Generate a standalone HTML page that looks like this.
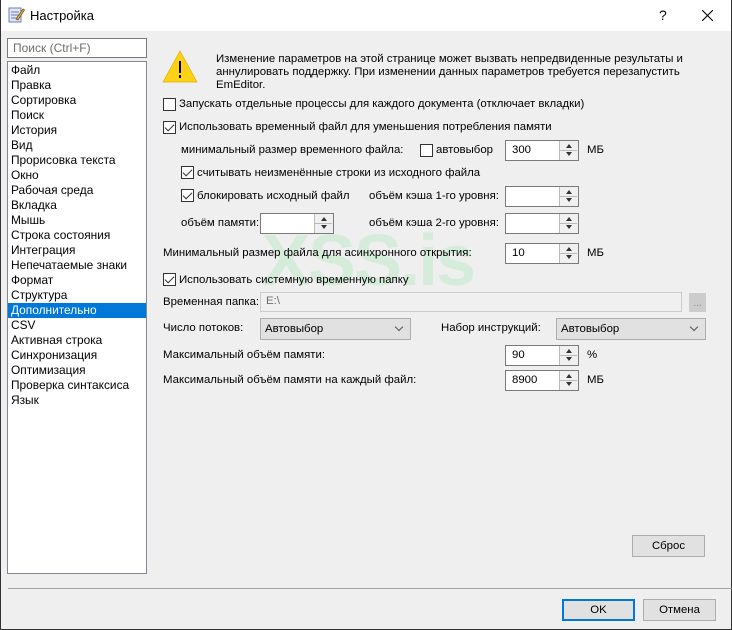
<!DOCTYPE html>
<html><head><meta charset="utf-8"><style>
*{margin:0;padding:0;box-sizing:border-box}
body{width:732px;height:630px;overflow:hidden;background:#efefef;font-family:"Liberation Sans","DejaVu Sans",sans-serif;font-size:11.4px;color:#000;position:relative}
.a{position:absolute;white-space:nowrap}
.t{position:absolute;white-space:nowrap;line-height:14px}
.cb{position:absolute;width:13px;height:13px;border:1px solid #333;background:#fff}
.cb.on::after{content:"";position:absolute;left:3px;top:0px;width:4px;height:8px;border:solid #333;border-width:0 1.3px 1.3px 0;transform:rotate(45deg)}
.spin{position:absolute;width:74px;height:21px;border:1px solid #7a7a7a;background:#fff}
.spin span{position:absolute;left:6px;top:3px}
.spin .b{position:absolute;right:0;top:0;width:19px;height:19px;border-left:1px solid #bbb;background:#f0f0f0}
.spin .b::before{content:"";position:absolute;left:6px;top:3px;border:3px solid transparent;border-bottom:4px solid #333;border-top:0}
.spin .b::after{content:"";position:absolute;left:6px;top:11px;border:3px solid transparent;border-top:4px solid #333;border-bottom:0}
.spin .m{position:absolute;right:1px;top:9px;width:17px;height:1px;background:#bbb}
.combo{position:absolute;height:22px;border:1px solid #adadad;background:#e1e1e1}
.combo span{position:absolute;left:4px;top:4px}
.combo i{position:absolute;right:8px;top:5px;width:6px;height:6px;border:solid #555;border-width:0 1px 1px 0;transform:rotate(45deg)}
.btn{position:absolute;height:22px;border:1px solid #adadad;background:#e1e1e1;text-align:center;line-height:20px}
.list div{height:15px;line-height:15px;padding-left:3px;font-size:11.9px}
</style></head><body>
<div class="a" style="left:0;top:0;width:732px;height:31px;background:#fff"></div>
<svg class="a" style="left:8px;top:6px" width="17" height="18" viewBox="0 0 17 18"><rect x="1" y="2" width="12" height="14" fill="#dfe6f5" stroke="#6b7fb0"/><path d="M3 6h8M3 9h8M3 12h6" stroke="#6b7fb0"/><path d="M8 13L15 3l1.5 1L10 14z" fill="#e8b040" stroke="#6a4a10" stroke-width=".7"/></svg>
<div class="a" style="left:30px;top:8px;font-size:13px">Настройка</div>
<div class="a" style="left:659px;top:7px;font-size:14px">?</div>
<svg class="a" style="left:702px;top:10px" width="11" height="11"><path d="M0 0L11 11M11 0L0 11" stroke="#000" stroke-width="1.1"/></svg>
<div class="a" style="left:0;top:0;width:1px;height:630px;background:#333"></div>
<div class="a" style="left:731px;top:0;width:1px;height:630px;background:#333"></div>
<div class="a" style="left:0;top:629px;width:732px;height:1px;background:#333"></div>

<div class="a" style="left:7px;top:38px;width:140px;height:20px;border:1px solid #7a7a7a;background:#fff;color:#6d6d6d;padding:2px 5px;font-size:12px">Поиск (Ctrl+F)</div>
<div class="a list" style="left:7px;top:61px;width:140px;height:513px;border:1px solid #828790;background:#fff;padding-top:1px">
<div>Файл</div><div>Правка</div><div>Сортировка</div><div>Поиск</div><div>История</div><div>Вид</div><div>Прорисовка текста</div><div>Окно</div><div>Рабочая среда</div><div>Вкладка</div><div>Мышь</div><div>Строка состояния</div><div>Интеграция</div><div>Непечатаемые знаки</div><div>Формат</div><div>Структура</div><div style="background:#0078d7;color:#fff">Дополнительно</div><div>CSV</div><div>Активная строка</div><div>Синхронизация</div><div>Оптимизация</div><div>Проверка синтаксиса</div><div>Язык</div>
</div>

<div class="a" style="left:262px;top:220px;font-size:72px;font-weight:bold;color:#d6ecda;letter-spacing:-2px">XSS.is</div>

<svg class="a" style="left:162px;top:50px" width="36" height="33"><path d="M18 1L35 32H1z" fill="#fcd116" stroke="#e0b000" stroke-width=".7"/><rect x="17" y="11" width="2" height="12" fill="#000"/><rect x="17" y="25" width="2" height="3" fill="#000"/></svg>
<div class="t" style="left:216px;top:53px;line-height:13px">Изменение параметров на этой странице может вызвать непредвиденные результаты и<br>аннулировать поддержку. При изменении данных параметров требуется перезапустить<br>EmEditor.</div>

<div class="cb" style="left:163px;top:98px"></div><div class="t" style="left:179px;top:97px">Запускать отдельные процессы для каждого документа (отключает вкладки)</div>
<div class="cb on" style="left:163px;top:121px"></div><div class="t" style="left:179px;top:120px">Использовать временный файл для уменьшения потребления памяти</div>

<div class="t" style="left:181px;top:143px">минимальный размер временного файла:</div>
<div class="cb" style="left:420px;top:144px"></div><div class="t" style="left:436px;top:143px">автовыбор</div>
<div class="spin" style="left:505px;top:140px"><span>300</span><div class="b"></div><div class="m"></div></div><div class="t" style="left:587px;top:143px">МБ</div>

<div class="cb on" style="left:181px;top:166px"></div><div class="t" style="left:197px;top:166px">считывать неизменённые строки из исходного файла</div>
<div class="cb on" style="left:181px;top:189px"></div><div class="t" style="left:197px;top:189px">блокировать исходный файл</div>
<div class="t" style="left:369px;top:189px">объём кэша 1-го уровня:</div>
<div class="spin" style="left:505px;top:186px"><div class="b"></div><div class="m"></div></div>
<div class="t" style="left:181px;top:216px">объём памяти:</div>
<div class="spin" style="left:260px;top:213px"><div class="b"></div><div class="m"></div></div>
<div class="t" style="left:369px;top:216px">объём кэша 2-го уровня:</div>
<div class="spin" style="left:505px;top:213px"><div class="b"></div><div class="m"></div></div>

<div class="t" style="left:163px;top:246px">Минимальный размер файла для асинхронного открытия:</div>
<div class="spin" style="left:505px;top:243px"><span>10</span><div class="b"></div><div class="m"></div></div><div class="t" style="left:587px;top:246px">МБ</div>

<div class="cb on" style="left:163px;top:273px"></div><div class="t" style="left:179px;top:273px">Использовать системную временную папку</div>
<div class="t" style="left:163px;top:295px">Временная папка:</div>
<div class="a" style="left:260px;top:292px;width:422px;height:20px;border:1px solid #ccc;background:#f0f0f0;color:#6d6d6d;padding:2px 5px">E:\</div>
<div class="a" style="left:689px;top:293px;width:17px;height:19px;border:1px solid #ccc;background:#ccc;color:#888;font-size:10px;text-align:center;line-height:19px">...</div>

<div class="t" style="left:163px;top:321px">Число потоков:</div>
<div class="combo" style="left:260px;top:318px;width:151px"><span>Автовыбор</span><i></i></div>
<div class="t" style="left:441px;top:321px">Набор инструкций:</div>
<div class="combo" style="left:556px;top:318px;width:150px"><span>Автовыбор</span><i></i></div>

<div class="t" style="left:163px;top:348px">Максимальный объём памяти:</div>
<div class="spin" style="left:505px;top:345px"><span>90</span><div class="b"></div><div class="m"></div></div><div class="t" style="left:587px;top:348px">%</div>
<div class="t" style="left:163px;top:373px">Максимальный объём памяти на каждый файл:</div>
<div class="spin" style="left:505px;top:370px"><span>8900</span><div class="b"></div><div class="m"></div></div><div class="t" style="left:587px;top:373px">МБ</div>

<div class="btn" style="left:632px;top:535px;width:73px">Сброс</div>
<div class="a" style="left:8px;top:588px;width:724px;height:1px;background:#a0a0a0"></div>
<div class="btn" style="left:562px;top:599px;width:73px;border:2px solid #0078d7;line-height:18px">OK</div>
<div class="btn" style="left:643px;top:599px;width:73px">Отмена</div>
</body></html>
